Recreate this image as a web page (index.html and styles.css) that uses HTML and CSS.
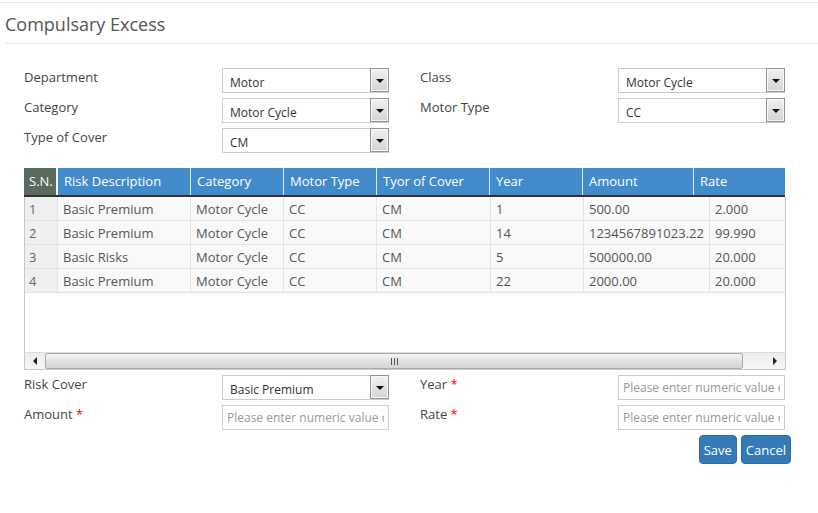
FILE: index.html
```html
<!DOCTYPE html>
<html>
<head>
<meta charset="utf-8">
<link rel="stylesheet" href="styles.css">
</head>
<body>
<div class="topline"></div>
<h1 class="title">Compulsary Excess</h1>

<div class="form top-form">
  <label class="lbl">Department</label>
  <div class="sel"><span class="sel-text">Motor</span><span class="sel-btn"><i class="tri"></i></span></div>
  <label class="lbl">Class</label>
  <div class="sel"><span class="sel-text">Motor Cycle</span><span class="sel-btn"><i class="tri"></i></span></div>

  <label class="lbl">Category</label>
  <div class="sel"><span class="sel-text">Motor Cycle</span><span class="sel-btn"><i class="tri"></i></span></div>
  <label class="lbl">Motor Type</label>
  <div class="sel"><span class="sel-text">CC</span><span class="sel-btn"><i class="tri"></i></span></div>

  <label class="lbl">Type of Cover</label>
  <div class="sel"><span class="sel-text">CM</span><span class="sel-btn"><i class="tri"></i></span></div>
</div>

<div class="grid">
  <div class="grid-head">
    <div class="hc sn">S.N.</div>
    <div class="hc">Risk Description</div>
    <div class="hc">Category</div>
    <div class="hc">Motor Type</div>
    <div class="hc">Tyor of Cover</div>
    <div class="hc">Year</div>
    <div class="hc">Amount</div>
    <div class="hc last">Rate</div>
  </div>
  <div class="grid-body">
    <div class="row">
      <div class="bc sn">1</div><div class="bc">Basic Premium</div><div class="bc">Motor Cycle</div><div class="bc">CC</div><div class="bc">CM</div><div class="bc">1</div><div class="bc">500.00</div><div class="bc last">2.000</div>
    </div>
    <div class="row">
      <div class="bc sn">2</div><div class="bc">Basic Premium</div><div class="bc">Motor Cycle</div><div class="bc">CC</div><div class="bc">CM</div><div class="bc">14</div><div class="bc">1234567891023.22</div><div class="bc last">99.990</div>
    </div>
    <div class="row">
      <div class="bc sn">3</div><div class="bc">Basic Risks</div><div class="bc">Motor Cycle</div><div class="bc">CC</div><div class="bc">CM</div><div class="bc">5</div><div class="bc">500000.00</div><div class="bc last">20.000</div>
    </div>
    <div class="row">
      <div class="bc sn">4</div><div class="bc">Basic Premium</div><div class="bc">Motor Cycle</div><div class="bc">CC</div><div class="bc">CM</div><div class="bc">22</div><div class="bc">2000.00</div><div class="bc last">20.000</div>
    </div>
  </div>
  <div class="hscroll">
    <div class="sb-btn"><i class="tri-left"></i></div>
    <div class="sb-thumb"><span class="grip"><i></i><i></i><i></i></span></div>
    <div class="sb-btn right"><i class="tri-right"></i></div>
  </div>
</div>

<div class="form bottom-form">
  <label class="lbl">Risk Cover</label>
  <div class="sel"><span class="sel-text">Basic Premium</span><span class="sel-btn"><i class="tri"></i></span></div>
  <label class="lbl">Year <span class="req">*</span></label>
  <input class="inp" type="text" placeholder="Please enter numeric value only">

  <label class="lbl">Amount <span class="req">*</span></label>
  <input class="inp" type="text" placeholder="Please enter numeric value only">
  <label class="lbl">Rate <span class="req">*</span></label>
  <input class="inp" type="text" placeholder="Please enter numeric value only">
</div>

<div class="actions">
  <button class="btn">Save</button>
  <button class="btn">Cancel</button>
</div>
</body>
</html>
```

FILE: styles.css
```css
* { box-sizing: border-box; }

body {
  margin: 0;
  font-family: "Open Sans", "Liberation Sans", sans-serif;
  color: #333;
  background: #fff;
}

.topline {
  height: 3px;
  border-bottom: 1px solid #e8e8e8;
}

.title {
  margin: 0 0 0 4px;
  padding: 3px 0 0 1px;
  height: 41px;
  line-height: 37px;
  font-size: 18px;
  font-weight: 400;
  color: #555;
  border-bottom: 1px solid #e5e5e5;
}

.form {
  display: grid;
  grid-template-columns: 198px 167px 31px 198px 167px;
  row-gap: 5px;
  margin-left: 24px;
}

.form .lbl:nth-child(4n+3) { grid-column: 4; }

.top-form { margin-top: 24px; }
.bottom-form { margin-top: 5px; }

.lbl {
  font-size: 13px;
  line-height: 18px;
  color: #444;
}

.req { color: #f00; }

.sel {
  height: 25px;
  border: 1px solid #ccc;
  background: #fff;
  display: flex;
  align-items: stretch;
}

.sel-text {
  flex: 1;
  font-size: 12px;
  line-height: 25px;
  padding: 1px 0 0 7px;
  color: #333;
  white-space: nowrap;
  overflow: hidden;
}

.sel-btn {
  width: 19px;
  margin: -1px -1px 0 0;
  border: 1px solid #939393;
  box-shadow: inset 0 0 0 1px #f8f8f8;
  background: linear-gradient(#f0f0f0, #d4d4d4);
  display: flex;
  align-items: center;
  justify-content: center;
}

.tri {
  width: 0;
  height: 0;
  border-left: 4px solid transparent;
  border-right: 4px solid transparent;
  border-top: 4px solid #111;
  margin-top: 1px;
}

.inp {
  height: 25px;
  border: 1px solid #ccc;
  padding: 0 4px;
  font-family: inherit;
  font-size: 12px;
  color: #333;
  outline: none;
  width: 167px;
}
.inp::placeholder { color: #999; opacity: 1; }

/* Grid */
.grid {
  margin: 15px 0 0 24px;
  width: 762px;
}

.grid-head {
  display: grid;
  grid-template-columns: 34px 133px 93px 93px 113px 93px 111px 91px;
  width: 761px;
  height: 29px;
  background: #428bca;
  border-bottom: 2px solid #333;
}

.hc {
  color: #fff;
  font-size: 13px;
  line-height: 27px;
  padding-left: 6px;
  border-right: 1px solid #dde8f3;
  white-space: nowrap;
  overflow: hidden;
}
.hc.sn {
  background: #5a6a5c;
  padding-left: 5px;
  border-right: 2px solid #f0f4f8;
}
.hc.last { border-right: none; }

.grid-body {
  height: 155px;
  border-left: 1px solid #c8c8c8;
  border-right: 1px solid #c8c8c8;
}

.row {
  display: grid;
  grid-template-columns: 33px 133px 93px 93px 114px 93px 126px 74px;
  height: 24px;
  background: #f9f9f9;
  border-bottom: 1px solid #e4e4e4;
}

.bc {
  font-size: 13px;
  line-height: 22px;
  padding: 1px 0 0 5px;
  color: #555;
  border-right: 1px solid #e4e4e4;
  white-space: nowrap;
  overflow: hidden;
}
.bc.sn {
  background: #efefef;
  padding-left: 4px;
  color: #666;
}
.bc.last { border-right: none; }

.hscroll {
  height: 18px;
  display: flex;
  background: linear-gradient(#ededed, #f6f6f6);
  border: 1px solid #c8c8c8;
  border-top: 1px solid #dcdcdc;
}

.sb-btn {
  width: 20px;
  display: flex;
  align-items: center;
  justify-content: center;
}
.sb-btn.right { width: 42px; justify-content: flex-end; padding-right: 8px; }

.tri-left {
  width: 0; height: 0;
  border-top: 4px solid transparent;
  border-bottom: 4px solid transparent;
  border-right: 4px solid #222;
}
.tri-right {
  width: 0; height: 0;
  border-top: 4px solid transparent;
  border-bottom: 4px solid transparent;
  border-left: 4px solid #222;
}

.sb-thumb {
  flex: 1;
  border: 1px solid #a9a9a9;
  border-radius: 2px;
  background: linear-gradient(#f4f4f4, #e2e2e2 50%, #d4d4d4);
  display: flex;
  align-items: center;
  justify-content: center;
}

.grip { display: flex; gap: 2px; }
.grip i {
  display: block;
  width: 1px;
  height: 7px;
  background: #555;
}

/* Buttons */
.actions {
  display: flex;
  justify-content: flex-end;
  gap: 4px;
  width: 791px;
  margin-top: 5px;
}

.btn {
  height: 29px;
  padding: 0 4px;
  font-family: inherit;
  font-size: 13px;
  color: #fff;
  background: #337ab7;
  border: 1px solid #2e6da4;
  border-radius: 4px;
}
```
